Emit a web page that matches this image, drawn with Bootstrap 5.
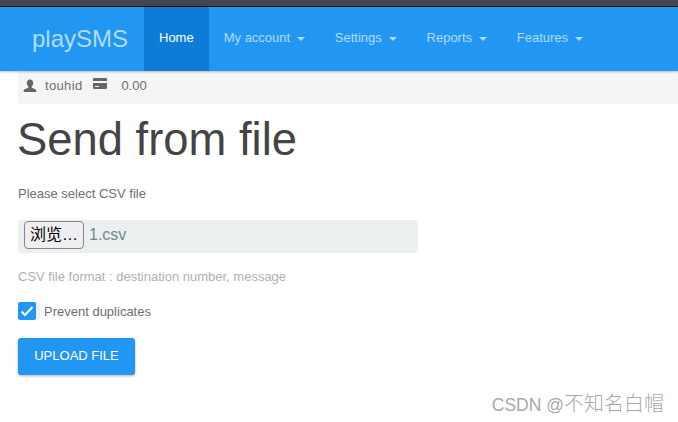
<!DOCTYPE html>
<html lang="en">
<head>
<meta charset="utf-8">
<title>playSMS</title>
<link rel="stylesheet" href="https://cdn.jsdelivr.net/npm/bootstrap@5.3.0/dist/css/bootstrap.min.css">
<style>
html,body{height:100%;overflow:hidden}
body{font-family:"Liberation Sans",Arial,sans-serif;font-size:13px;color:#6e6e6e;background:#fff;position:relative}
.topstrip{height:7px;background:#43454f;border-bottom:1px solid #111}
.mainbar{height:64px;background:#2196f3;box-shadow:0 1px 2px rgba(0,0,0,.25);padding:0 0 0 32px;position:relative;z-index:2}
.mainbar .navbar-brand{font-size:24px;color:#b3dcfb;padding:0;margin:0 15px 0 0;width:97px}
.mainbar .nav-link{height:64px;padding:0 15px 2px;display:flex;align-items:center;font-size:13px;color:#b3dcfb}
.mainbar .nav-link.active{background:#0d7cd6;color:#fff}
.mainbar .dropdown-toggle::after{margin-left:6.700px;margin-top:2px;vertical-align:2px;border-top-width:4px;border-right-width:4.500px;border-left-width:4.500px;border-bottom:0}
.userstrip{margin-left:18px;height:33px;background:#f5f5f5;border-bottom-left-radius:3px;padding:0 0 4px 5px;font-size:13px}
.username{margin-left:8px;letter-spacing:.35px}
.cardglyph{margin:0 15px 4px 10px}
.pagebody{padding:0 0 0 18px}
.pagetitle{font-size:45.400px;font-weight:400;line-height:52px;color:#444;margin:10px 0 0 -1px}
.leadline{font-size:13px;margin:19px 0 0;line-height:17px}
.filebox{width:400px;height:33px;background:#eceff0;border-radius:3px;margin-top:18px;padding:0 6px 3px;color:#6f8a8a;font-size:16px;gap:5px}
.filebtn{font-family:"Liberation Sans","Noto Sans CJK SC",sans-serif;font-size:16px;line-height:1;color:#000;height:28px;width:60px;padding:0;background:#efeff2;border:1px solid #85858f;border-radius:4px;white-space:nowrap}
.hintline{font-size:13px;color:#b0b0b0;margin:15px 0 0;line-height:17px}
.checkrow{margin-top:17px;font-size:13px;height:18px}
.checkmark{width:18px;height:18px;background:#2196f3;border-radius:2px;box-shadow:4px 0 0 #eef1f2}
.checklabel{margin-left:8px;line-height:17px;padding-top:1px}
.uploadbtn{background:#2196f3;color:#fff;border:0;border-radius:3px;height:37px;width:117px;font-size:13px;margin-top:18px;padding:0 0 2px;box-shadow:0 1px 3px rgba(0,0,0,.3)}
.uploadbtn:hover{background:#2196f3;color:#fff}
.markline{position:absolute;right:14px;top:391px;font-family:"Noto Sans CJK SC",sans-serif;font-weight:300;font-size:20px;line-height:24px;color:#a8a8a8;white-space:nowrap}
.markline .latinpart{font-family:"Liberation Sans",sans-serif;font-size:17.500px;font-weight:400}
</style>
</head>
<body>
<div class="topstrip"></div>
<nav class="mainbar d-flex align-items-center">
  <a class="navbar-brand" href="#">playSMS</a>
  <ul class="nav flex-nowrap">
    <li class="nav-item"><a class="nav-link active" href="#">Home</a></li>
    <li class="nav-item"><a class="nav-link dropdown-toggle" href="#">My account</a></li>
    <li class="nav-item"><a class="nav-link dropdown-toggle" href="#">Settings</a></li>
    <li class="nav-item"><a class="nav-link dropdown-toggle" href="#">Reports</a></li>
    <li class="nav-item"><a class="nav-link dropdown-toggle" href="#">Features</a></li>
  </ul>
</nav>
<div class="userstrip d-flex align-items-center">
  <svg width="14" height="14" viewBox="0 0 14 14" fill="#666" aria-hidden="true"><path d="M7 0.5c2 0 3.2 1.500 3.200 3.500 0 1.500-.6 2.800-1.500 3.500v1.200l3.600 1.500c.7.300 1 .8 1 1.500v1.300H.7v-1.300c0-.7.300-1.200 1-1.500l3.600-1.500V7.500C4.400 6.800 3.800 5.500 3.800 4 3.800 2 5 .5 7 .5z"/></svg>
  <span class="username">touhid</span>
  <svg class="cardglyph" width="14" height="11" viewBox="0 0 14 11" fill="#666" aria-hidden="true"><path d="M0 1.200C0 .5.500 0 1.200 0h11.600c.7 0 1.200.5 1.200 1.200V3H0zM0 5h14v4.800c0 .7-.5 1.200-1.200 1.200H1.200C.5 11 0 10.500 0 9.800zm2 3v1h4V8z"/></svg>
  <span>0.00</span>
</div>
<main class="pagebody">
  <h1 class="pagetitle">Send from file</h1>
  <p class="leadline">Please select CSV file</p>
  <div class="filebox d-flex align-items-center">
    <button type="button" class="filebtn">浏览…</button>
    <span>1.csv</span>
  </div>
  <p class="hintline">CSV file format : destination number, message</p>
  <div class="checkrow d-flex align-items-center">
    <span class="checkmark d-flex align-items-center justify-content-center">
      <svg width="14" height="12" viewBox="0 0 14 12" aria-hidden="true"><path d="M1.500 6.500l3.500 3.500 7.500-8" fill="none" stroke="#fff" stroke-width="2"/></svg>
    </span>
    <span class="checklabel">Prevent duplicates</span>
  </div>
  <button type="button" class="btn uploadbtn d-block">UPLOAD FILE</button>
</main>
<div class="markline"><span class="latinpart">CSDN @</span>不知名白帽</div>
</body>
</html>
